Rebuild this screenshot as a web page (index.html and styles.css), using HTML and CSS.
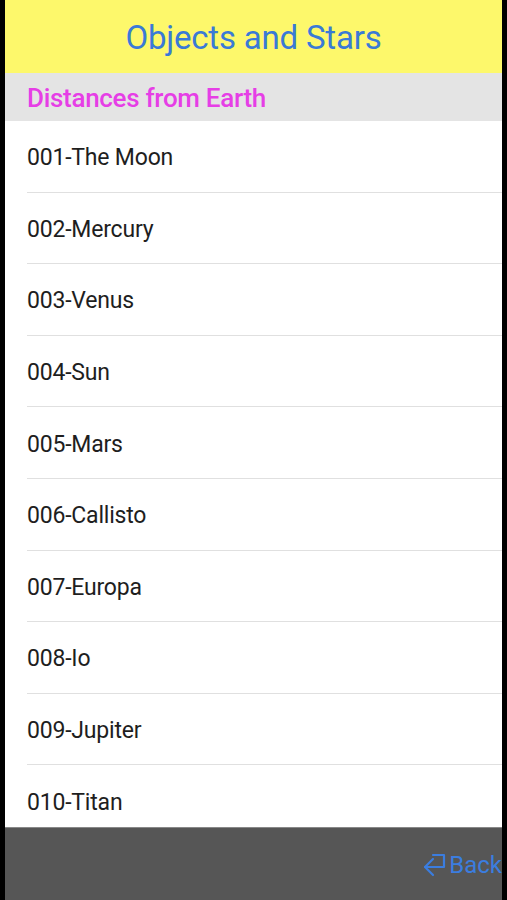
FILE: index.html
```html
<!DOCTYPE html>
<html lang="en">
<head>
    <meta charset="UTF-8">
    <title>Objects and Stars</title>
    <link rel="stylesheet" href="styles.css">
</head>
<body>
    <div class="app">
        <header class="title-bar">
            <h1>Objects and Stars</h1>
        </header>

        <div class="section-header">Distances from Earth</div>

        <ul class="list">
            <li class="row">001-The Moon</li>
            <li class="row">002-Mercury</li>
            <li class="row">003-Venus</li>
            <li class="row">004-Sun</li>
            <li class="row">005-Mars</li>
            <li class="row">006-Callisto</li>
            <li class="row">007-Europa</li>
            <li class="row">008-Io</li>
            <li class="row">009-Jupiter</li>
            <li class="row">010-Titan</li>
        </ul>

        <footer class="tool-bar">
            <a href="#" class="back-btn">
                <svg class="back-icon" width="24" height="26" viewBox="0 0 24 26" fill="none" stroke="currentColor" stroke-width="2.2" stroke-linecap="round" stroke-linejoin="round">
                    <path d="M10 3 H21 V15 H2"/>
                    <path d="M10 7 L2 15 L10 23"/>
                </svg>
                <span>Back</span>
            </a>
        </footer>
    </div>
</body>
</html>
```

FILE: styles.css
```css
html, body {
    height: 100%;
}
body {
    margin: 0;
    padding: 0;
    background-color: #000;
    font-family: Roboto, 'Liberation Sans', sans-serif;
    overflow: hidden;
}
.app {
    display: flex;
    flex-direction: column;
    height: 900px;
    margin: 0 5px;
    background-color: #fff;
}
.title-bar {
    height: 73px;
    flex-shrink: 0;
    background-color: #fdf86b;
    display: flex;
    align-items: center;
    justify-content: center;
    padding-top: 2px;
    box-sizing: border-box;
}
.title-bar h1 {
    margin: 0;
    font-size: 33px;
    font-weight: 400;
    color: #3a7ad6;
    letter-spacing: -0.2px;
}
.section-header {
    height: 48px;
    flex-shrink: 0;
    background-color: #e4e4e4;
    color: #e63ee6;
    font-size: 26px;
    font-weight: 500;
    display: flex;
    align-items: center;
    padding-left: 22px;
    padding-top: 2px;
    box-sizing: border-box;
    letter-spacing: -0.3px;
}
.list {
    flex: 1;
    margin: 0;
    padding: 0;
    list-style: none;
    overflow: hidden;
}
.row {
    height: 70.6px;
    margin-left: 22px;
    border-bottom: 1px solid #e0e0e0;
    display: flex;
    align-items: center;
    padding-top: 3px;
    box-sizing: content-box;
    height: 67.6px;
    font-size: 23px;
    color: #1e1e1e;
    letter-spacing: -0.2px;
}
.tool-bar {
    height: 72px;
    flex-shrink: 0;
    background-color: #565656;
    border-top: 1px solid #888;
    display: flex;
    align-items: center;
    justify-content: flex-end;
}
.back-btn {
    display: flex;
    align-items: center;
    gap: 2px;
    color: #3b7ddf;
    text-decoration: none;
    font-size: 24px;
    margin-top: 2px;
}
.back-icon {
    display: block;
}
```
